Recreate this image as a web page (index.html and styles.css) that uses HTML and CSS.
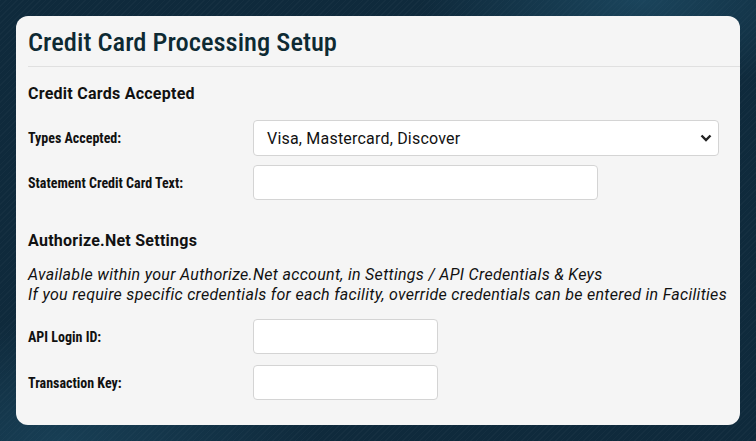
FILE: index.html
```html
<!DOCTYPE html>
<html lang="en">
<head>
<meta charset="utf-8">
<title>Credit Card Processing Setup</title>
<link rel="stylesheet" href="styles.css">
</head>
<body>
<div class="page">
  <div class="card">
    <div class="card-header">
      <h1 class="title">Credit Card Processing Setup</h1>
    </div>
    <div class="card-body">
      <h2 class="section-title">Credit Cards Accepted</h2>
      <div class="form-row row-select">
        <label class="label">Types Accepted:</label>
        <div class="select select-wide">
          <span>Visa, Mastercard, Discover</span>
          <svg class="chev" width="12" height="8" viewBox="0 0 12 8"><path d="M1.5 1.5 L6 6 L10.5 1.5" fill="none" stroke="#222" stroke-width="2.4"/></svg>
        </div>
      </div>
      <div class="form-row">
        <label class="label">Statement Credit Card Text:</label>
        <div class="input input-medium"></div>
      </div>

      <h2 class="section-title section-gap">Authorize.Net Settings</h2>
      <p class="note">Available within your Authorize.Net account, in Settings / API Credentials &amp; Keys<br>If you require specific credentials for each facility, override credentials can be entered in Facilities</p>
      <div class="form-row">
        <label class="label">API Login ID:</label>
        <div class="input input-small"></div>
      </div>
      <div class="form-row">
        <label class="label">Transaction Key:</label>
        <div class="input input-small"></div>
      </div>
    </div>
  </div>
</div>
</body>
</html>
```
FILE: styles.css
```css
html, body {
  margin: 0;
  padding: 0;
}
body {
  width: 756px;
  height: 441px;
  overflow: hidden;
  background-color: #0f2a3c;
  background-image:
    radial-gradient(ellipse 220px 90px at 640px 0px, rgba(40, 100, 130, 0.45), rgba(16, 42, 60, 0) 100%),
    radial-gradient(ellipse 260px 120px at 60px 441px, rgba(40, 100, 130, 0.35), rgba(16, 42, 60, 0) 100%),
    repeating-linear-gradient(135deg, rgba(255,255,255,0.025) 0px, rgba(255,255,255,0.025) 1px, rgba(0,0,0,0) 1px, rgba(0,0,0,0) 4px);
  font-family: Roboto, "Noto Sans", sans-serif;
  color: #111;
}
.page {
  padding: 16px;
}
.card {
  background: #f5f5f5;
  border-radius: 12px;
  height: 409px;
  box-sizing: border-box;
  overflow: hidden;
}
.card-header {
  margin-left: 12px;
  border-bottom: 1px solid #e0e0e0;
  height: 50px;
  display: flex;
  align-items: center;
}
.title {
  margin: 0;
  font-family: "Roboto Condensed", "Liberation Sans Narrow", "DejaVu Sans Condensed", sans-serif;
  font-stretch: condensed;
  font-weight: 500;
  font-size: 26.5px;
  color: #0e2a33;
  letter-spacing: 0;
}
.card-body {
  padding: 18px 12px 0 12px;
}
.section-title {
  margin: 0 0 17px 0;
  font-size: 16px;
  font-weight: 700;
  letter-spacing: 0.25px;
  line-height: 18px;
}
.section-gap {
  margin-top: 32px;
  margin-bottom: 15px;
}
.form-row {
  display: grid;
  grid-template-columns: 225px 1fr;
  align-items: center;
  margin-bottom: 11px;
}
.row-select {
  margin-bottom: 9px;
}
.label {
  font-family: "Roboto Condensed", "Liberation Sans Narrow", "DejaVu Sans Condensed", sans-serif;
  font-stretch: condensed;
  font-weight: 700;
  font-size: 14px;
}
.select, .input {
  background: #fff;
  border: 1px solid #d4d4d4;
  border-radius: 4px;
  box-sizing: border-box;
  height: 35px;
}
.select {
  height: 36px;
  display: flex;
  align-items: center;
  justify-content: space-between;
  padding: 0 6px 0 13px;
  font-size: 16px;
  letter-spacing: 0.2px;
  color: #111;
}
.select-wide { width: 466px; }
.input-medium { width: 345px; }
.input-small { width: 185px; }
.chev { display: block; }
.note {
  margin: 0 0 14px 0;
  font-style: italic;
  font-size: 16px;
  line-height: 20px;
  letter-spacing: 0.3px;
  color: #111;
}
```
